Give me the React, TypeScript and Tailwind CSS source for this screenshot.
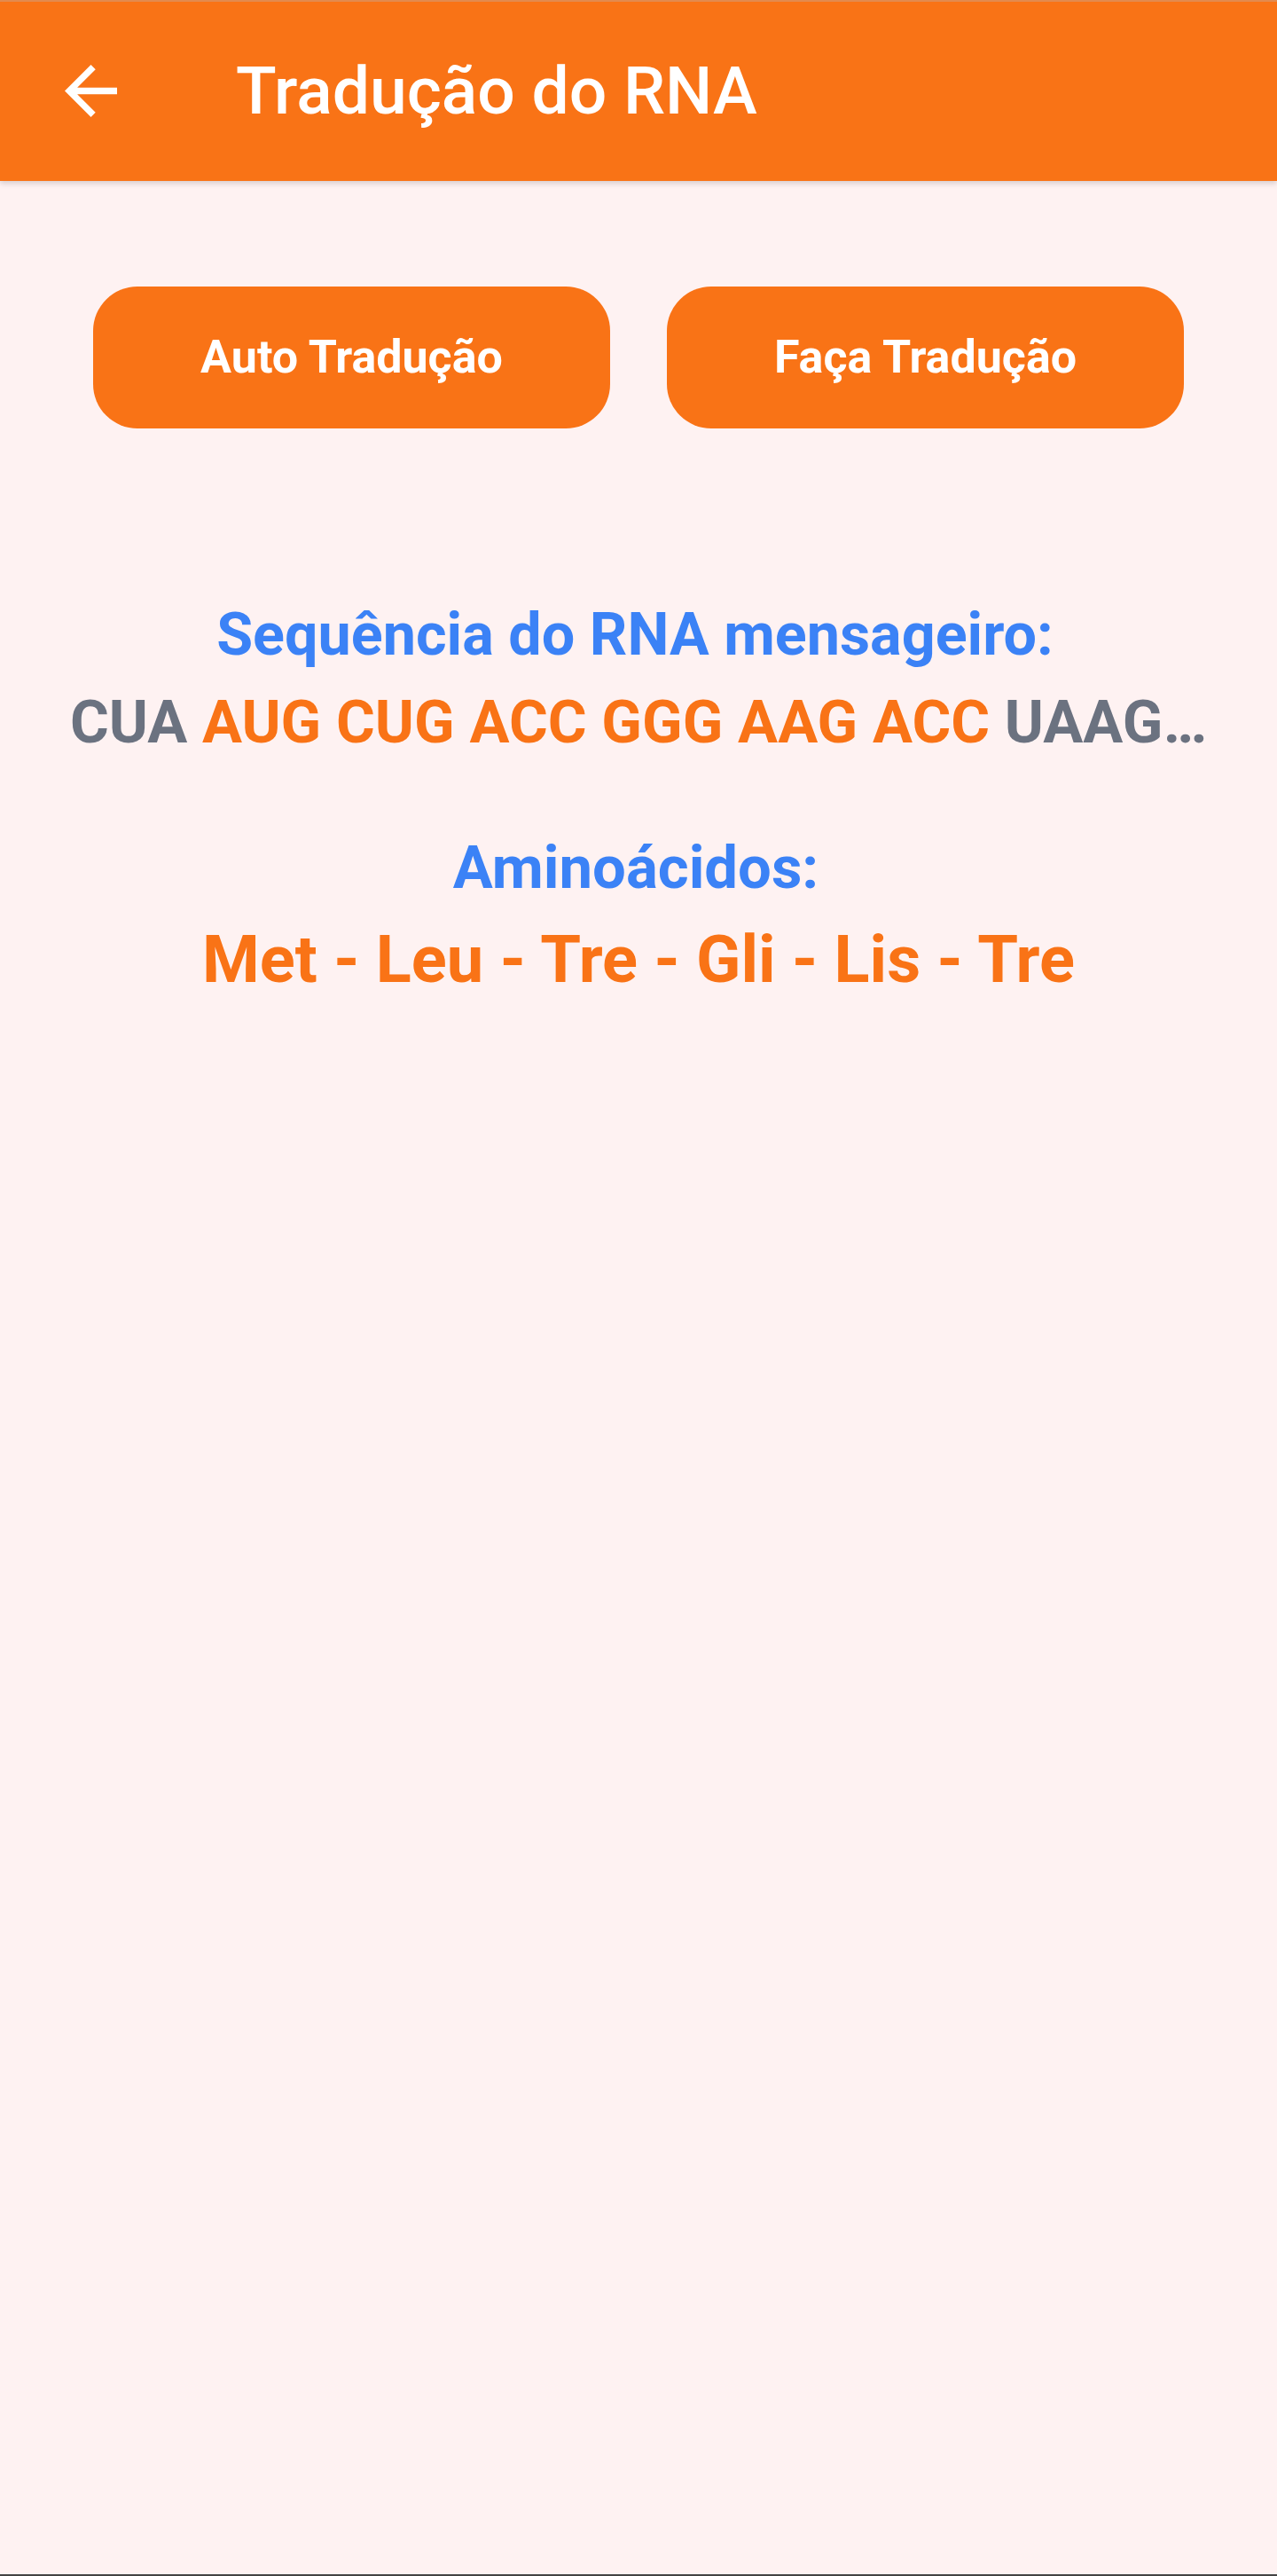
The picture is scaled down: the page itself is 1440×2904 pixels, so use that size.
import React from 'react';

const codons: { text: string; active: boolean }[] = [
  { text: 'CUA', active: false },
  { text: 'AUG', active: true },
  { text: 'CUG', active: true },
  { text: 'ACC', active: true },
  { text: 'GGG', active: true },
  { text: 'AAG', active: true },
  { text: 'ACC', active: true },
  { text: 'UAAG…', active: false },
];

const aminoacids = ['Met', 'Leu', 'Tre', 'Gli', 'Lis', 'Tre'];

const font = "font-['Roboto','Liberation_Sans',sans-serif]";

export default function App() {
  return (
    <div className={`flex min-h-[2904px] w-full flex-col bg-[#fef2f2] ${font}`}>
      {/* App bar */}
      <header className="relative z-10 flex h-[204px] shrink-0 flex-col bg-[#f97316] shadow-[0_3px_6px_rgba(0,0,0,0.15)]">
        <div className="h-[2px] bg-[#e38a4f]" />
        <div className="flex flex-1 items-center pl-[73px] pb-[2px]">
          <button className="flex h-[59px] w-[59px] items-center justify-center text-white">
            <svg viewBox="4 4 16 16" width="59" height="59" fill="currentColor">
              <path d="M20 11H7.83l5.59-5.59L12 4l-8 8 8 8 1.41-1.41L7.83 13H20v-2z" />
            </svg>
          </button>
          <h1 className="ml-[134px] text-[75px] font-medium leading-[87px] text-white">Tradução do RNA</h1>
        </div>
      </header>

      <main className="flex flex-1 flex-col items-center">
        {/* Actions */}
        <div className="mt-[119px] flex w-full gap-[64px] px-[105px]">
          <button className="flex h-[160px] flex-1 items-center justify-center rounded-[50px] bg-[#f97316] text-[52px] font-bold text-white">
            Auto Tradução
          </button>
          <button className="flex h-[160px] flex-1 items-center justify-center rounded-[50px] bg-[#f97316] text-[52px] font-bold text-white">
            Faça Tradução
          </button>
        </div>

        {/* mRNA */}
        <h2 className="mt-[194px] pr-[8px] text-[66.5px] font-bold leading-[77px] text-[#3b82f6]">Sequência do RNA mensageiro:</h2>
        <p className="mt-[22px] flex gap-[0.25em] text-[67px] font-bold leading-[77px]">
          {codons.map((c, i) => (
            <span key={i} className={c.active ? 'text-[#f97316]' : 'text-[#6b7280]'}>
              {c.text}
            </span>
          ))}
        </p>

        {/* Amino acids */}
        <h2 className="mt-[86px] pr-[6px] text-[67px] font-bold leading-[79px] text-[#3b82f6]">Aminoácidos:</h2>
        <p className="mt-[21px] text-[74px] font-bold leading-[86px] text-[#f97316]">
          {aminoacids.join(' - ')}
        </p>
      </main>

      <div className="h-[2px] shrink-0 bg-[#444444]" />
    </div>
  );
}
